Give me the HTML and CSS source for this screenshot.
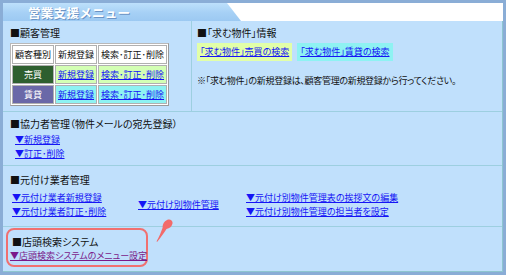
FILE: index.html
```html
<!DOCTYPE html>
<html lang="ja">
<head>
<meta charset="utf-8">
<link rel="stylesheet" href="styles.css">
</head>
<body>
<div class="frame">
  <div class="header">
    <div class="title-band"><span class="title">営業支援メニュー</span></div>
  </div>
  <div class="content">
    <section class="sec sec1">
      <div class="col-left">
        <h2 class="head">■顧客管理</h2>
        <table class="ctable">
          <tr><td class="th">顧客種別</td><td class="th">新規登録</td><td class="th">検索･訂正･削除</td></tr>
          <tr><td class="kind buy">売買</td><td class="g"><a href="#">新規登録</a></td><td class="g"><a href="#">検索･訂正･削除</a></td></tr>
          <tr><td class="kind rent">賃貸</td><td class="c"><a href="#">新規登録</a></td><td class="c"><a href="#">検索･訂正･削除</a></td></tr>
        </table>
      </div>
      <div class="col-right">
        <h2 class="head">■「求む物件」情報</h2>
        <div class="wants">
          <a href="#" class="want g">「求む物件」売買の検索</a>
          <a href="#" class="want c">「求む物件」賃貸の検索</a>
        </div>
        <p class="note">※「求む物件」の新規登録は、顧客管理の新規登録から行ってください。</p>
      </div>
    </section>
    <section class="sec sec2">
      <h2 class="head">■協力者管理（物件メールの宛先登録）</h2>
      <div class="links ind">
        <a href="#">▼新規登録</a>
        <a href="#">▼訂正･削除</a>
      </div>
    </section>
    <section class="sec sec3">
      <h2 class="head">■元付け業者管理</h2>
      <div class="cols3">
        <div class="links c1">
          <a href="#">▼元付け業者新規登録</a>
          <a href="#">▼元付け業者訂正･削除</a>
        </div>
        <div class="links c2">
          <a href="#">▼元付け別物件管理</a>
        </div>
        <div class="links c3">
          <a href="#">▼元付け別物件管理表の挨拶文の編集</a>
          <a href="#">▼元付け別物件管理の担当者を設定</a>
        </div>
      </div>
    </section>
    <section class="sec sec4">
      <div class="callout">
        <h2 class="head">■店頭検索システム</h2>
        <a href="#" class="visited">▼店頭検索システムのメニュー設定</a>
      </div>
      <svg class="tail" width="18" height="24" viewBox="0 0 18 24"><path d="M11 1 C14 -0.5 17 1.5 16.5 4.5 C16 7.5 13.5 9.5 10.5 10 C8 14 5 18 1.5 22.5 C1 23 0.3 22.6 0.7 22 C3 18 5 13.5 6.5 9 C6.5 5 8 2.5 11 1 Z" fill="#f26a6a"/></svg>
    </section>
  </div>
</div>
</body>
</html>
```
FILE: styles.css
```css
html, body {
  margin: 0;
  padding: 0;
}
body {
  background: #8aadd6;
  width: 506px;
  height: 275px;
  overflow: hidden;
  font-family: "Noto Sans CJK JP", "DejaVu Sans", sans-serif;
  font-size: 9px;
  color: #111;
  font-feature-settings: "palt";
}
.frame {
  padding: 3px;
  height: 269px;
  display: flex;
  flex-direction: column;
}
.header {
  height: 18px;
  background: #ffffff;
  flex: none;
}
.title-band {
  height: 18px;
  width: 238px;
  background: linear-gradient(180deg, #bde0fb 0%, #a6d0f5 55%, #9cc9f2 100%);
  clip-path: polygon(0 0, 224px 0, 238px 100%, 0 100%);
  display: flex;
  align-items: center;
}
.title {
  margin-left: 25px;
  color: #fff;
  font-size: 12.5px;
  font-weight: bold;
  letter-spacing: 0.3px;
  text-shadow: 1px 1px 0 #6b93c4;
  font-feature-settings: normal;
}
.content {
  flex: 1;
  background: #c0e0fc;
  border-right: 1px solid #8ec6cf;
  border-bottom: 1px solid #8ec6cf;
  display: flex;
  flex-direction: column;
}
.sec {
  border-bottom: 1px solid #9dcfe0;
}
.head {
  margin: 0;
  font-size: 10px;
  font-weight: normal;
  line-height: 14px;
}
a {
  color: #1515f5;
  text-decoration: underline;
}
a.visited {
  color: #7a1a8a;
}
.sec1 {
  height: 90px;
  display: flex;
}
.col-left {
  width: 181px;
  padding: 5px 0 0 7px;
  border-right: 1px solid #9dcfe0;
}
.col-right {
  flex: 1;
  padding: 5px 0 0 5px;
}
.ctable {
  margin-top: 3px;
  border: 1px solid #b8b8b8;
  border-right-color: #9a9a9a;
  border-bottom-color: #9a9a9a;
  background: #fff;
  border-spacing: 1px;
}
.ctable td {
  border: 1px solid #b0b0b0;
  height: 17px;
  padding: 0 2px;
  text-align: center;
  font-size: 9px;
  white-space: nowrap;
}
.ctable td.th {
  background: #fff;
}
.ctable td.kind {
  color: #fff;
  width: 34px;
}
.ctable td.buy { background: #2e5f2f; }
.ctable td.rent { background: #6a68a8; }
.ctable td.g { background: #d3ffb4; }
.ctable td.c { background: #8ef2f2; }
.wants {
  margin-top: 3px;
  display: flex;
  gap: 5px;
}
.want {
  display: block;
  padding: 3px 3px;
  line-height: 12px;
}
.want.g { background: #e2ffa8; }
.want.c { background: #8ef2f2; }
.note {
  margin: 13px 0 0 0;
  line-height: 14px;
  letter-spacing: -0.3px;
}
.sec2 {
  height: 54px;
  padding: 5px 0 0 7px;
  box-sizing: border-box;
}
.links {
  display: flex;
  flex-direction: column;
}
.links a {
  line-height: 14px;
  white-space: nowrap;
}
.ind {
  margin-top: 2px;
  padding-left: 5px;
}
.sec3 {
  height: 61px;
  padding: 7px 0 0 7px;
  box-sizing: border-box;
}
.cols3 {
  display: flex;
  align-items: center;
  margin-top: 4px;
}
.c1 { width: 126px; padding-left: 2px; }
.c2 { width: 108px; }
.sec4 {
  flex: 1;
  border-bottom: none;
  position: relative;
}
.callout {
  margin: 1px 0 0 3px;
  width: 142px;
  height: 39px;
  border: 2px solid #f07070;
  border-radius: 8px;
  padding: 5px 0 0 2px;
  box-sizing: border-box;
  display: flex;
  flex-direction: column;
}
.callout .head { line-height: 14px; padding-left: 2px; }
.callout a { line-height: 14px; white-space: nowrap; }
.tail {
  position: absolute;
  left: 153px;
  top: -8px;
}
```
